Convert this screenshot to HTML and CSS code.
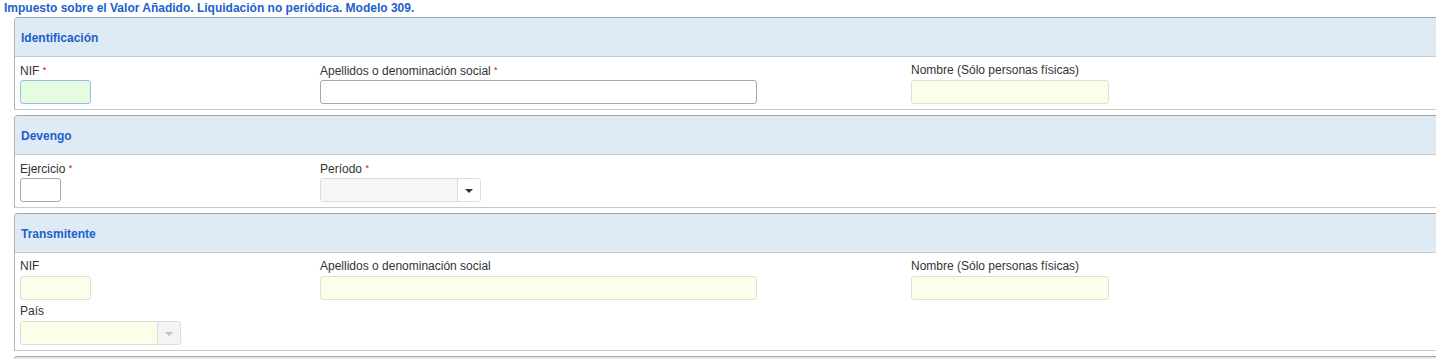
FILE: index.html
```html
<!DOCTYPE html>
<html lang="es">
<head>
  <meta charset="UTF-8">
  <meta name="viewport" content="width=device-width, initial-scale=1.0">
  <title>Modelo 309</title>
  <link rel="stylesheet" href="styles.css">
</head>
<body>
<div class="page-title">Impuesto sobre el Valor Añadido. Liquidación no periódica. Modelo 309.</div>

<div class="form">
  <div class="panel">
    <div class="panel-header">Identificación</div>
    <div class="panel-body">
      <div class="field">
        <label class="field-label">NIF <span class="req">*</span></label>
        <input type="text" class="input input-nif input-ok">
      </div>
      <div class="field">
        <label class="field-label">Apellidos o denominación social <span class="req">*</span></label>
        <input type="text" class="input input-name">
      </div>
      <div class="field">
        <label class="field-label">Nombre (Sólo personas físicas)</label>
        <input type="text" class="input input-first input-opt">
      </div>
    </div>
  </div>

  <div class="panel">
    <div class="panel-header">Devengo</div>
    <div class="panel-body">
      <div class="field">
        <label class="field-label">Ejercicio <span class="req">*</span></label>
        <input type="text" class="input input-year">
      </div>
      <div class="field">
        <label class="field-label">Período <span class="req">*</span></label>
        <div class="combo combo-period">
          <div class="combo-value"></div>
          <div class="combo-btn"><span class="caret"></span></div>
        </div>
      </div>
    </div>
  </div>

  <div class="panel">
    <div class="panel-header">Transmitente</div>
    <div class="panel-body">
      <div class="field">
        <label class="field-label">NIF</label>
        <input type="text" class="input input-nif input-opt">
      </div>
      <div class="field">
        <label class="field-label">Apellidos o denominación social</label>
        <input type="text" class="input input-name input-opt">
      </div>
      <div class="field">
        <label class="field-label">Nombre (Sólo personas físicas)</label>
        <input type="text" class="input input-first input-opt">
      </div>
      <div class="field field-row">
        <label class="field-label">País</label>
        <div class="combo combo-country disabled">
          <div class="combo-value"></div>
          <div class="combo-btn"><span class="caret"></span></div>
        </div>
      </div>
    </div>
  </div>

  <div class="panel panel-last">
    <div class="panel-header"></div>
  </div>
</div>
</body>
</html>
```

FILE: styles.css
```css
:root {
  --blue: #1c5fcd;
  --header-bg: #dfebf4;
  --border: #c9c9c9;
  --border-dark: #a4a4a4;
  --text: #333333;
  --opt-bg: #fcfee9;
  --ok-bg: #e5fce0;
}

* {
  margin: 0;
  padding: 0;
  box-sizing: border-box;
}

html, body {
  overflow: hidden;
}

body {
  font-family: "Liberation Sans", Arial, Helvetica, sans-serif;
  font-size: 12px;
  color: var(--text);
  background: #ffffff;
}

.page-title {
  padding: 1px 0 0 4px;
  height: 17px;
  line-height: 15px;
  font-weight: bold;
  color: var(--blue);
}

.form {
  padding-left: 14px;
  margin-right: -20px;
}

.panel {
  margin-bottom: 5px;
  border: 1px solid var(--border);
  border-top-color: var(--border-dark);
  border-left-color: #b4b4b4;
  border-radius: 4px 4px 0 0;
}

.panel-last {
  height: 3px;
  border-bottom: none;
  margin-bottom: 0;
  overflow: hidden;
}

.panel-header {
  height: 39px;
  line-height: 38px;
  padding: 1px 0 0 6px;
  background: var(--header-bg);
  border-bottom: 1px solid #c8ccd0;
  border-radius: 3px 3px 0 0;
  font-weight: bold;
  color: var(--blue);
}

.panel-body {
  display: grid;
  grid-template-columns: 300px 591px 1fr;
  row-gap: 2px;
  padding: 4px 0 5px 5px;
}

.field {
  display: flex;
  flex-direction: column;
  align-items: flex-start;
}

.field-row {
  grid-column: 1;
}

.field-label {
  height: 18px;
  line-height: 18px;
  margin-bottom: 1px;
}

.req {
  color: #e00000;
  font-size: 9px;
  vertical-align: 2px;
}

.input {
  height: 24px;
  border: 1px solid #dddddd;
  border-radius: 3px;
  background: #ffffff;
  font: inherit;
  outline: none;
}

.input-nif { width: 71px; }
.input-year { width: 41px; border-color: #a8a8a8; }
.input-name { width: 437px; border-color: #a8a8a8; }
.input-first { width: 198px; }

.input-opt {
  background: var(--opt-bg);
  border-color: #dfe0d8;
}

.input-ok {
  background: var(--ok-bg);
  border-color: #92bfe6;
}

.combo {
  display: flex;
  height: 24px;
  width: 161px;
  border: 1px solid #dddddd;
  border-radius: 3px;
  overflow: hidden;
}

.combo-value {
  flex: 1;
  background: #f6f6f6;
}

.combo-btn {
  width: 23px;
  display: flex;
  align-items: center;
  justify-content: center;
  border-left: 1px solid #dddddd;
  background: #ffffff;
}

.caret {
  width: 0;
  height: 0;
  border-left: 4px solid transparent;
  border-right: 4px solid transparent;
  border-top: 4px solid #333333;
  margin-top: 1px;
}

.combo.disabled .combo-value {
  background: var(--opt-bg);
}

.combo.disabled .combo-btn {
  background: #f4f4f4;
}

.combo.disabled .caret {
  border-top-color: #c0c0c0;
}
```
